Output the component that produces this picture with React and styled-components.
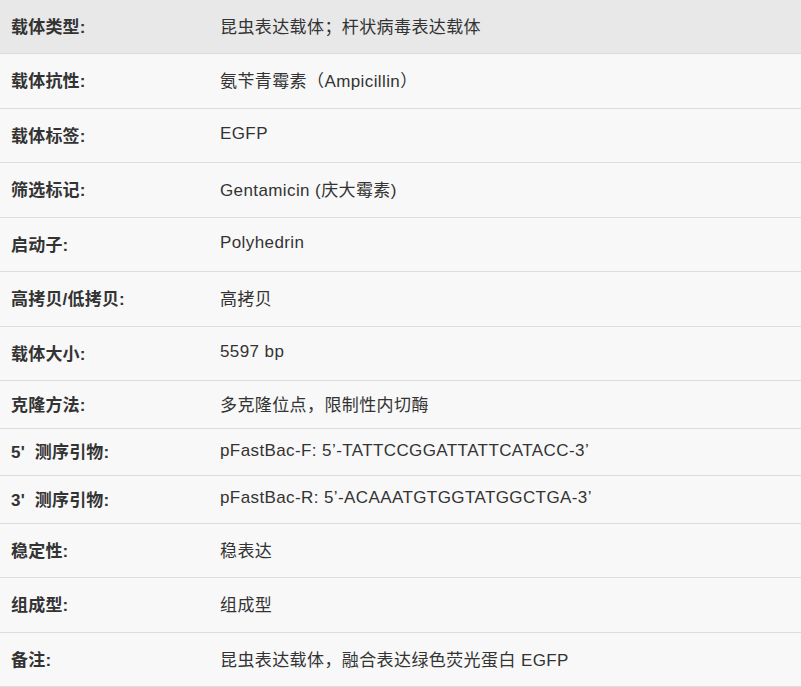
import React from 'react';
import styled, { createGlobalStyle } from 'styled-components';

const rows = [
    { label: '载体类型:', value: '昆虫表达载体；杆状病毒表达载体', head: true },
    { label: '载体抗性:', value: '氨苄青霉素（Ampicillin）' },
    { label: '载体标签:', value: 'EGFP' },
    { label: '筛选标记:', value: 'Gentamicin (庆大霉素)' },
    { label: '启动子:', value: 'Polyhedrin' },
    { label: '高拷贝/低拷贝:', value: '高拷贝' },
    { label: '载体大小:', value: '5597 bp' },
    { label: '克隆方法:', value: '多克隆位点，限制性内切酶', compact: true },
    { label: "5'  测序引物:", value: 'pFastBac-F: 5’-TATTCCGGATTATTCATACC-3’', compact: true },
    { label: "3'  测序引物:", value: 'pFastBac-R: 5’-ACAAATGTGGTATGGCTGA-3’', compact: true },
    { label: '稳定性:', value: '稳表达' },
    { label: '组成型:', value: '组成型' },
    { label: '备注:', value: '昆虫表达载体，融合表达绿色荧光蛋白 EGFP' },
];

const App = () => {
    return (
        <>
            <GlobalStyle />
            <Table>
                {rows.map((row) => (
                    <Row key={row.label} head={row.head} compact={row.compact}>
                        <Label>{row.label}</Label>
                        <Value>{row.value}</Value>
                    </Row>
                ))}
            </Table>
        </>
    );
};

const GlobalStyle = createGlobalStyle`
    body {
        margin: 0;
        background: #f8f8f8;
        font-family: 'Liberation Sans', 'Noto Sans CJK SC', sans-serif;
        color: #333;
    }
`;

const Table = styled.div`
    display: flex;
    flex-direction: column;
    width: 801px;
`;

const Row = styled.div.withConfig({
    shouldForwardProp: (prop) => prop !== 'head' && prop !== 'compact',
})`
    display: grid;
    grid-template-columns: 209px 1fr;
    align-items: center;
    box-sizing: border-box;
    padding-bottom: 2px;
    height: ${(p) => (p.head ? '54px' : p.compact ? '47.5px' : '54.5px')};
    border-bottom: 1px solid #dddddd;
    background: ${(p) => (p.head ? '#e8e8e8' : '#f8f8f8')};
`;

const Label = styled.div`
    padding-left: 11px;
    font-size: 17px;
    font-weight: 700;
    letter-spacing: 0.2px;
    white-space: pre;
`;

const Value = styled.div`
    padding-left: 11px;
    font-size: 17px;
    letter-spacing: 0.4px;
    white-space: nowrap;
`;

export default App;
